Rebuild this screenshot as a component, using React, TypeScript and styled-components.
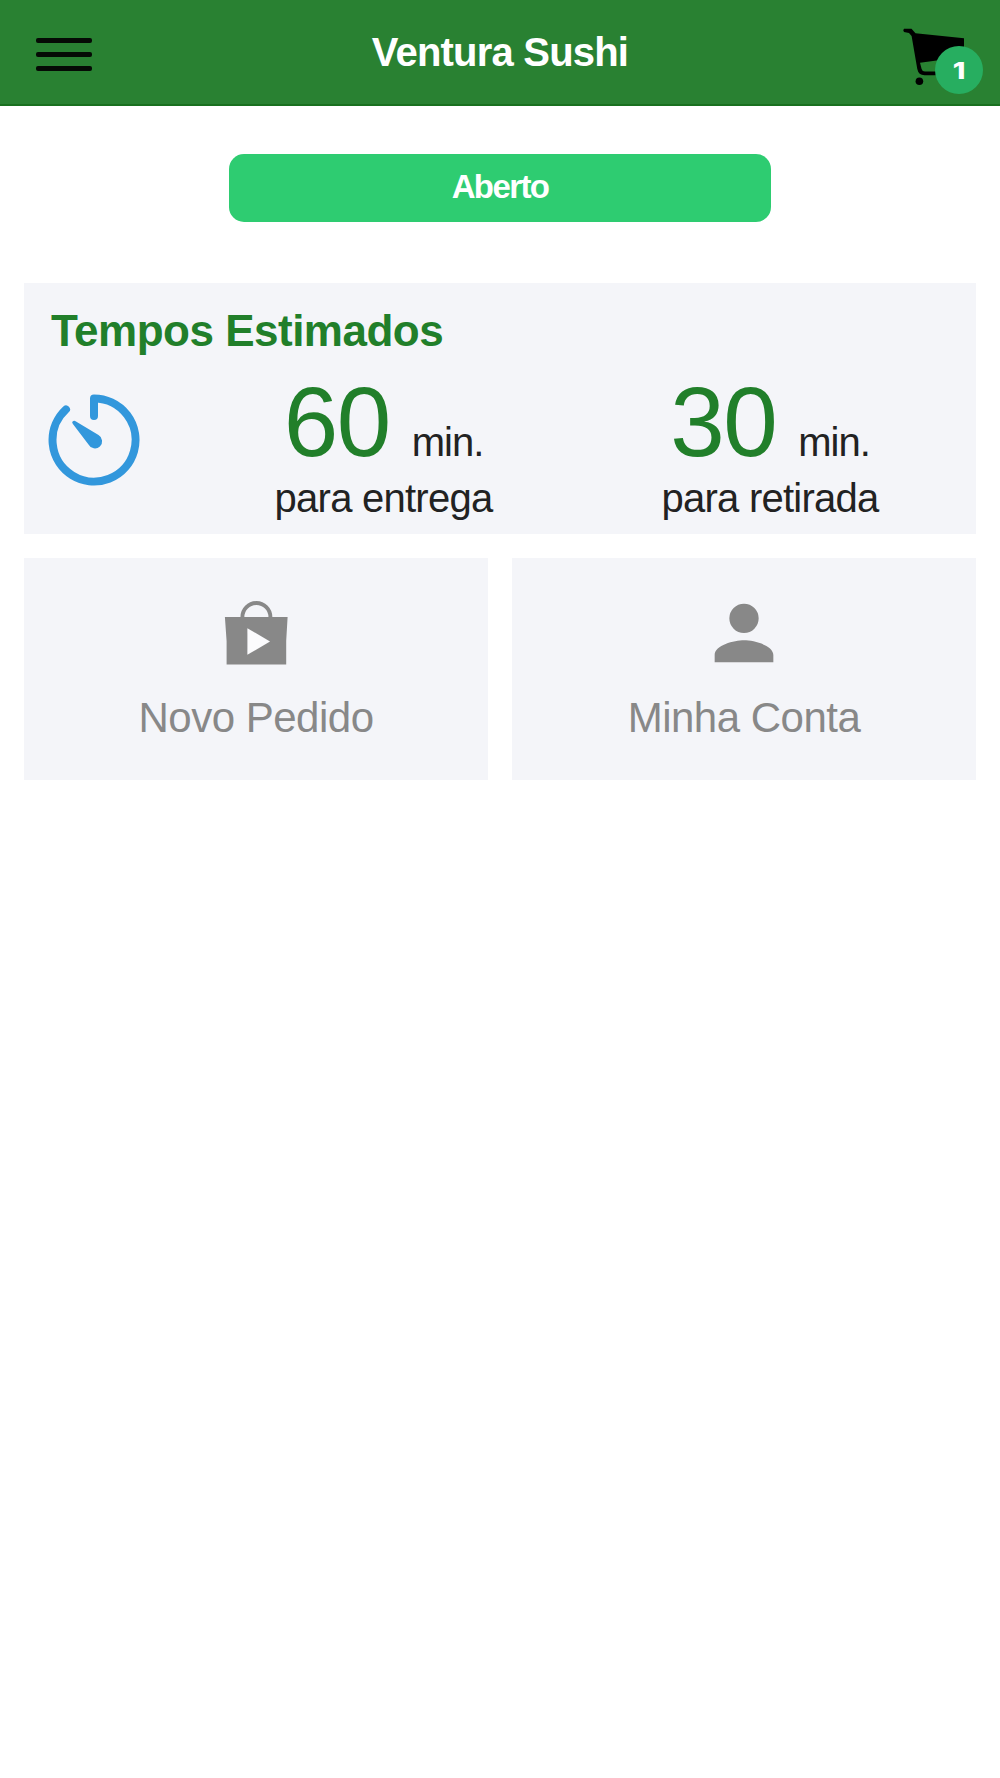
import React from "react";
import styled, { createGlobalStyle } from "styled-components";

const GlobalStyle = createGlobalStyle`
  * { box-sizing: border-box; }
  body {
    margin: 0;
    background: #fff;
    font-family: "Liberation Sans", Arial, sans-serif;
    color: #222;
  }
`;

const Screen = styled.div`
  min-height: 1778px;
  background: #fff;
`;

const Header = styled.header`
  display: grid;
  grid-template-columns: 150px 1fr 150px;
  align-items: center;
  height: 106px;
  background: #298132;
  border-bottom: 2px solid #19701f;
`;

const MenuButton = styled.button`
  justify-self: start;
  margin: 4px 0 0 36px;
  padding: 0;
  border: 0;
  background: none;
  display: flex;
  flex-direction: column;
  gap: 9px;
`;

const MenuBar = styled.span`
  width: 56px;
  height: 5px;
  border-radius: 2px;
  background: #050b05;
`;

const Title = styled.h1`
  margin: 0;
  padding-bottom: 1px;
  text-align: center;
  font-size: 40px;
  line-height: 46px;
  letter-spacing: -0.8px;
  color: #fff;
`;

const CartButton = styled.div`
  position: relative;
  width: 100px;
  height: 104px;
  justify-self: end;
  svg { display: block; }
`;

const Badge = styled.span`
  position: absolute;
  left: 35px;
  top: 46px;
  width: 48px;
  height: 48px;
  border-radius: 50%;
  background: #27ae60;
  color: #fff;
  font-family: Inter, "Liberation Sans", sans-serif;
  font-size: 23px;
  font-weight: 800;
  line-height: 51px;
  text-align: center;
`;

const Count = styled.span`
  display: inline-block;
  transform: scaleX(1.25);
`;

const Status = styled.div`
  width: 542px;
  height: 68px;
  margin: 48px auto 0;
  border-radius: 15px;
  background: #2ecc71;
  color: #fff;
  font-size: 33px;
  font-weight: 700;
  letter-spacing: -1.6px;
  line-height: 65px;
  text-align: center;
`;

const Content = styled.main`
  padding: 61px 24px 0;
  display: grid;
  gap: 24px;
`;

const Card = styled.section`
  height: 251px;
  background: #f4f5f9;
  padding: 22px 0 0 24px;
`;

const CardTitle = styled.h2`
  margin: 0 0 1px;
  padding-left: 3px;
  font-size: 44px;
  line-height: 51px;
  letter-spacing: -0.5px;
  color: #217f2a;
`;

const Times = styled.div`
  display: grid;
  grid-template-columns: 142px 387px 386px;
`;

const TimerIcon = styled.svg`
  width: 92px;
  height: 92px;
  margin-top: 37px;
`;

const Estimate = styled.div`
  text-align: center;
  font-size: 40px;
  letter-spacing: -0.75px;
  line-height: 46px;
`;

const Amount = styled.div`
  height: 118px;
  line-height: 130px;
  letter-spacing: -1px;
`;

const Minutes = styled.span`
  font-size: 98px;
  letter-spacing: -1.5px;
  margin-right: 12px;
  color: #217f2a;
`;

const Tiles = styled.nav`
  display: grid;
  grid-template-columns: 1fr 1fr;
  gap: 24px;
`;

const Tile = styled.a`
  height: 222px;
  background: #f4f5f9;
  color: #888;
  display: flex;
  flex-direction: column;
  align-items: center;
  padding-top: 31px;
  font-size: 42px;
  line-height: 48px;
  gap: 17px;
  svg { width: 88px; height: 88px; fill: #888; }
`;

const TileLabel = styled.span`
  letter-spacing: -0.5px;
`;

function CartIcon() {
  return (
    <svg width="100" height="104" viewBox="0 0 100 104">
      <path d="M4 28.8H11.5L15.5 33.2L64 38.2V50L36.7 60.5L20 62.8L21.6 69Q22.3 71.6 25 71.6H44V75.2H24.5Q18.5 75.2 17.3 69L11.6 36L9 33L4 32Q2.5 30 4 28.8Z" fill="#000" />
      <circle cx="19.4" cy="81.2" r="3.8" fill="#000" />
    </svg>
  );
}

function Timer() {
  return (
    <TimerIcon viewBox="0 0 92 92">
      <path d="M46 22V4.5A41.5 41.5 0 1 1 18 15.4" fill="none" stroke="#3297dc" strokeWidth="8" strokeLinecap="round" strokeLinejoin="round" />
      <path d="M24.6 27.6Q26 26 28 27.4L50.5 41A7.2 7.2 0 1 1 40.5 50.5L24.9 30Q23.6 28.5 24.6 27.6Z" fill="#3297dc" />
    </TimerIcon>
  );
}

function BagIcon() {
  return (
    <svg viewBox="0 0 88 88">
      <path d="M30.4 29.5V28A14 14 0 0 1 58.4 28V29.5" fill="none" stroke="#888" strokeWidth="3.9" />
      <path d="M12.9 28H75.6L74.2 52V75.4H14.6V52Z" />
      <path d="M35.4 39.2V65.8L58 52.5Z" fill="#fbfbfd" />
    </svg>
  );
}

function PersonIcon() {
  return (
    <svg viewBox="0 0 24 24">
      <path d="M12 12a4 4 0 1 0 0-8 4 4 0 0 0 0 8zm0 2c-2.67 0-8 1.34-8 4v2h16v-2c0-2.66-5.33-4-8-4z" />
    </svg>
  );
}

export default function App() {
  return (
    <>
      <GlobalStyle />
      <Screen>
        <Header>
          <MenuButton aria-label="Menu">
            <MenuBar />
            <MenuBar />
            <MenuBar />
          </MenuButton>
          <Title>Ventura Sushi</Title>
          <CartButton>
            <CartIcon />
            <Badge><Count>1</Count></Badge>
          </CartButton>
        </Header>
        <Status>Aberto</Status>
        <Content>
          <Card>
            <CardTitle>Tempos Estimados</CardTitle>
            <Times>
              <Timer />
              <Estimate>
                <Amount><Minutes>60</Minutes> min.</Amount>
                para entrega
              </Estimate>
              <Estimate>
                <Amount><Minutes>30</Minutes> min.</Amount>
                para retirada
              </Estimate>
            </Times>
          </Card>
          <Tiles>
            <Tile>
              <BagIcon />
              <TileLabel>Novo Pedido</TileLabel>
            </Tile>
            <Tile>
              <PersonIcon />
              <TileLabel>Minha Conta</TileLabel>
            </Tile>
          </Tiles>
        </Content>
      </Screen>
    </>
  );
}
